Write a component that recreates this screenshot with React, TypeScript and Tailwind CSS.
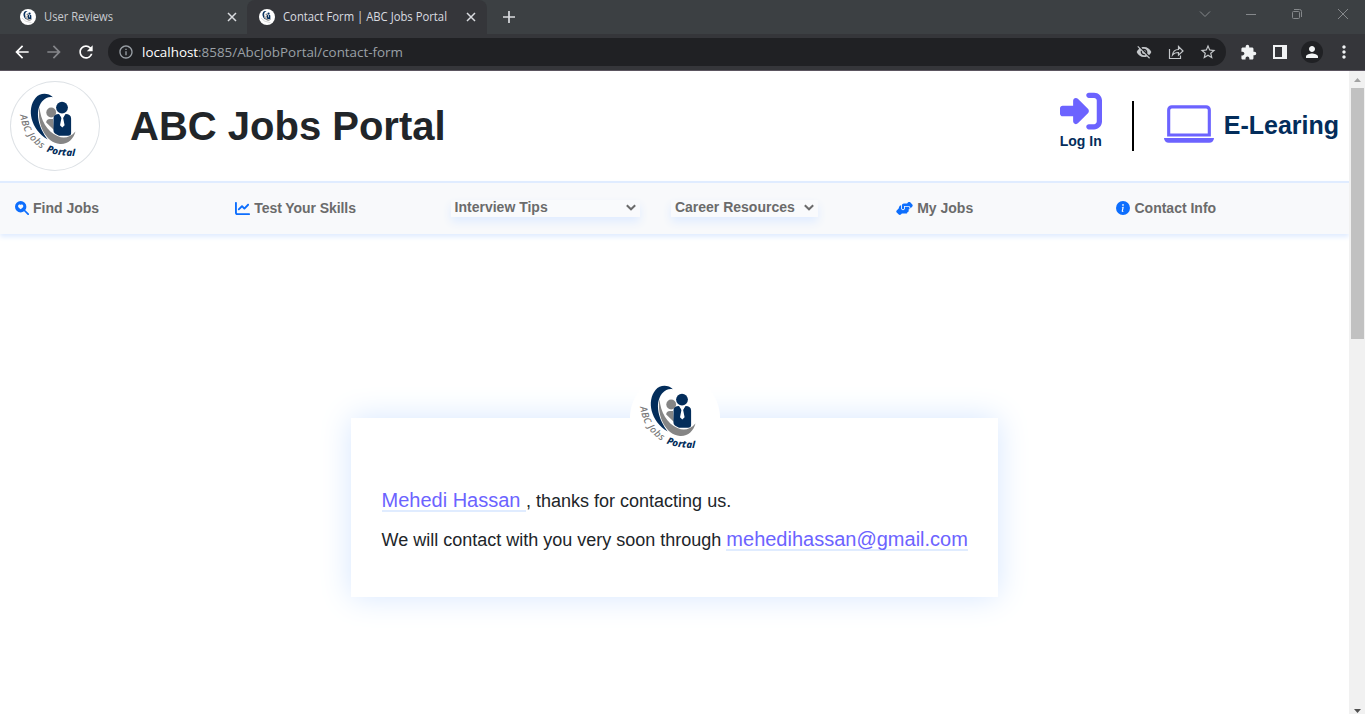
import type { ReactNode } from "react";
import { FaChartLine, FaHandshakeAngle, FaRightToBracket } from "react-icons/fa6";
import { BsInfoCircleFill, BsLaptop, BsSearchHeartFill } from "react-icons/bs";
import {
  MdArrowBack,
  MdArrowForward,
  MdExtension,
  MdInfoOutline,
  MdMoreVert,
  MdPerson,
  MdRefresh,
  MdStarBorder,
  MdVisibilityOff,
} from "react-icons/md";

function LogoArt() {
  return (
    <>
      <path d="M43 16.2C38 11.500 30 11.500 25.500 17C16.500 28 20.500 48 37.700 58.500C29 47 24 31 32 20.500C35.500 16.500 39 15.600 43 16.200Z" fill="#032d5b" />
      <path d="M29.500 26C26.500 43 36 62 50 63C58 63.500 63.500 58 65.500 50.500C60 56.500 54 58 47.500 55C37 50.500 30.500 39 29.500 26Z" fill="#858585" />
      <circle cx="41.2" cy="31.500" r="4.900" fill="#858585" />
      <path d="M43 38h-3c-2.500 0-3.800 1.400-3.800 3.500L44 49z" fill="#858585" />
      <circle cx="52" cy="26.600" r="5.900" fill="#032d5b" />
      <path d="M43.500 37.500c0-3 2-4.500 5.500-4.500l3.300 5 3.300-5c3.500 0 5.500 1.500 5.500 4.500V52c0 2-1 2.700-3 2.700H49C45.500 53.200 43.500 52 43.500 50z" fill="#032d5b" />
      <path d="M50.200 33.500h4.200l-1.300 3.200 1.500 7.500-2.300 2.300-2.300-2.300 1.500-7.500z" fill="#fff" />
    </>
  );
}

function Logo({ id }: { id: string }) {
  return (
    <svg viewBox="0 0 90 90" className="size-full">
      <LogoArt />
      <path id={`${id}-left`} d="M10 34C12.500 51 21 63 38 71" fill="none" />
      <path id={`${id}-right`} d="M36.300 70.500C44 73.700 53 75.200 72 75.200" fill="none" />
      <g className="font-['Noto_Sans',sans-serif] italic" fontSize="9.7">
        <text fill="#777" fontWeight="500" letterSpacing="0.5">
          <textPath href={`#${id}-left`}>ABC Jobs</textPath>
        </text>
        <text fill="#032d5b" fontWeight="800" letterSpacing="0.1">
          <textPath href={`#${id}-right`}>Portal</textPath>
        </text>
      </g>
    </svg>
  );
}

function Favicon() {
  return (
    <svg viewBox="3 3 82 82" className="size-4 shrink-0 rounded-full bg-white">
      <LogoArt />
      <path d="M14 50Q28 70 62 73" fill="none" stroke="#bbb" strokeWidth="3" />
    </svg>
  );
}

function Cross({ size }: { size: number }) {
  return (
    <svg width={size} height={size} viewBox="0 0 10 10" fill="none" stroke="currentColor" strokeWidth="1.5">
      <path d="M1 1l8 8M9 1l-8 8" />
    </svg>
  );
}

function Browser() {
  return (
    <header className="h-[71px] shrink-0 border-b border-[#5b5560] bg-[#35363a] font-['Open_Sans',sans-serif] text-[12px] text-[#dadce0]">
      <div className="flex h-[34px] bg-[#3c4043]">
        <div className="flex w-[247px] items-center rounded-br-lg pr-[10px] pl-5">
          <Favicon />
          <span className="ml-2 flex-1 text-[#c8cbcf]">
            <Label text="User Reviews" width={69} />
          </span>
          <Cross size={10} />
        </div>
        <div className="flex w-[240px] items-center rounded-t-lg bg-[#35363a] pr-[11px] pl-3">
          <Favicon />
          <span className="ml-2 flex-1">
            <Label text="Contact Form | ABC Jobs Portal" width={164} />
          </span>
          <Cross size={10} />
        </div>
        <svg className="mt-[11px] ml-4" width="12" height="12" viewBox="0 0 12 12" stroke="#dadce0" strokeWidth="1.7">
          <path d="M6 0v12M0 6h12" />
        </svg>
        <div className="ml-auto flex items-start gap-[34px] pt-[8px] pr-4 text-[#85888b]">
          <svg width="12" height="12" viewBox="0 0 12 12" fill="none" stroke="currentColor"><path d="M1 3.5l5 5 5-5" /></svg>
          <svg width="12" height="12" viewBox="0 0 12 12" fill="none" stroke="currentColor"><path d="M1 6.5h10" /></svg>
          <svg width="12" height="12" viewBox="0 0 12 12" fill="none" stroke="currentColor"><path d="M3 1.5h5.5q2 0 2 2V9" /><rect x="1.5" y="3.5" width="7" height="7" rx="1" /></svg>
          <svg width="12" height="12" viewBox="0 0 12 12" fill="none" stroke="currentColor"><path d="M1 1l10 10M11 1L1 11" /></svg>
        </div>
      </div>
      <div className="flex h-[36px] items-center pl-3">
        <div className="flex w-24 items-center gap-3">
          <MdArrowBack className="size-5 text-white" />
          <MdArrowForward className="size-5 text-[#85868a]" />
          <MdRefresh className="size-5 text-white" />
        </div>
        <div className="flex h-7 w-[1118px] items-center rounded-full bg-[#202124] pr-[9px] pl-[10px]">
          <MdInfoOutline className="size-4 text-[#9aa0a6]" />
          <span className="ml-2 flex-1">
            <svg width="262" height="20" className="block overflow-visible">
              <text x="0" y="15" fontSize="13.5" textLength="261" lengthAdjust="spacingAndGlyphs" fill="#9aa0a6">
                <tspan fill="#fff">localhost</tspan>:8585/AbcJobPortal/contact-form
              </text>
            </svg>
          </span>
          <div className="flex items-center gap-[15px] text-[#c4c7ca]">
            <MdVisibilityOff className="mr-px size-4" />
            <svg width="16" height="16" viewBox="0 0 16 16" fill="none" stroke="currentColor" strokeWidth="1.2">
              <path d="M1.500 5v9.500h11V11.500M4.500 11c.5-4 2.500-5.500 6-5.500V2.500L15 7l-4.500 4.200V8.500C8 8.500 6 9 4.500 11Z" />
            </svg>
            <MdStarBorder className="size-[18px]" />
          </div>
        </div>
        <div className="flex flex-1 items-center pl-[14px] text-[#f1f3f4]">
          <MdExtension className="size-[17px]" />
          <svg className="ml-4" width="14" height="14" viewBox="0 0 14 14" fill="none" stroke="currentColor" strokeWidth="2">
            <path d="M1 1h12v12H1z" /><path d="M11 1v12" strokeWidth="4" />
          </svg>
          <span className="ml-[14px] grid size-[22px] place-items-center rounded-full bg-[#202124]">
            <MdPerson className="size-[18px]" />
          </span>
          <MdMoreVert className="ml-[11px] size-5" />
        </div>
      </div>
    </header>
  );
}

function Label({ text, width }: { text: string; width: number }) {
  return (
    <svg width={width} height="16" className="block overflow-visible" fill="currentColor">
      <text x="0" y="12" fontSize="12" textLength={width} lengthAdjust="spacingAndGlyphs">{text}</text>
    </svg>
  );
}

function NavLink({ icon, children }: { icon: ReactNode; children: ReactNode }) {
  return (
    <a className="flex w-[220.3px] items-center gap-1 pl-[15px] text-[#0d6efd]">
      <span className="pb-px">{icon}</span>
      <span className="text-[#6b6b6b]">{children}</span>
    </a>
  );
}

function NavSelect({ children, box }: { children: ReactNode; box: string }) {
  return (
    <div className="w-[220.3px] pl-[10px]">
      <div className={`flex h-[17px] items-center justify-between bg-[#f9fafc] pr-1 pb-[2px] pl-[4px] text-[#6b6b6b] shadow-[0_5px_10px_#e0ecff] ${box}`}>
        <span>{children}</span>
        <svg width="10" height="8" viewBox="0 0 10 8" fill="none" stroke="currentColor" strokeWidth="2">
          <path d="M.8 1.300l4.200 4 4.200-4" />
        </svg>
      </div>
    </div>
  );
}

export default function App() {
  return (
    <div className="flex h-[714px] w-[1365px] flex-col overflow-hidden bg-white font-['Liberation_Sans',sans-serif] text-[#212529]">
      <Browser />
      <div className="flex min-h-0 flex-1">
        <main className="flex w-[1349px] flex-col">
          <section className="flex h-[110px] items-center pr-[10px] pl-[10px]">
            <div className="size-[90px] rounded-full shadow-[inset_0_0_0_1px_#dee2e6]"><Logo id="header-arc" /></div>
            <h1 className="ml-[30px] pb-px text-[40px] leading-none font-bold">ABC Jobs Portal</h1>
            <div className="ml-auto flex items-center">
              <div className="flex w-[42px] flex-col items-center pb-3 text-[#032d5b]">
                <FaRightToBracket className="size-[42px] text-[#6c63ff]" />
                <span className="text-[14px] leading-[18px] font-bold whitespace-nowrap">Log In</span>
              </div>
              <div className="ml-[30px] h-[50px] w-[2px] bg-black" />
              <span className="ml-[30px] pb-1"><BsLaptop className="size-[50px] text-[#6c63ff]" /></span>
              <span className="ml-[10px] text-[25px] font-bold text-[#032d5b]">E-Learing</span>
            </div>
          </section>
          <nav className="flex h-[53px] items-center border-t-2 border-[#e0ecff] bg-[#f8f9fb] text-[14px] font-bold shadow-[0_3px_5px_#e0ecff]">
            <NavLink icon={<BsSearchHeartFill className="size-[14px]" />}>Find Jobs</NavLink>
            <NavLink icon={<FaChartLine className="size-[15px]" />}>
              <span className="tracking-[-0.07px]">Test Your Skills</span>
            </NavLink>
            <NavSelect box="w-[189px]">Interview Tips</NavSelect>
            <NavSelect box="w-[147px]">Career Resources</NavSelect>
            <NavLink icon={<FaHandshakeAngle className="size-[17px]" />}>My Jobs</NavLink>
            <NavLink icon={<BsInfoCircleFill className="size-[14px]" />}>Contact Info</NavLink>
          </nav>
          <section className="relative mt-[184px] ml-[351px] flex h-[179px] w-[647px] flex-col gap-[9px] bg-white pt-[70px] pl-[30.5px] text-[18px] shadow-[0_0_30px_#d5e6ff]">
            <div className="absolute top-[-45px] left-[279px] size-[90px] rounded-full bg-white"><Logo id="card-arc" /></div>
            <p className="flex h-[30px] items-baseline whitespace-pre">
              <span className="border-b-2 border-[#e0ecff] text-[20px] leading-[19px] text-[#6c63ff]">Mehedi Hassan </span>, thanks for contacting us.
            </p>
            <p className="flex h-[30px] items-baseline whitespace-pre">
              We will contact with you very soon through <span className="border-b-2 border-[#e0ecff] text-[20px] leading-[19px] text-[#6c63ff]">mehedihassan@gmail.com</span>
            </p>
          </section>
        </main>
        <aside className="flex w-4 flex-col items-center justify-between bg-[#f1f1f1]">
          <div className="flex w-full flex-col items-center">
            <svg className="my-[6px]" width="7" height="5" viewBox="0 0 7 5"><path d="M0 5l3.500-4L7 5z" fill="#a3a3a3" /></svg>
            <div className="h-[251px] w-[13px] bg-[#c1c1c1]" />
          </div>
          <svg width="7" height="5" viewBox="0 0 7 5"><path d="M0 0l3.500 4L7 0z" fill="#505050" /></svg>
        </aside>
      </div>
    </div>
  );
}
